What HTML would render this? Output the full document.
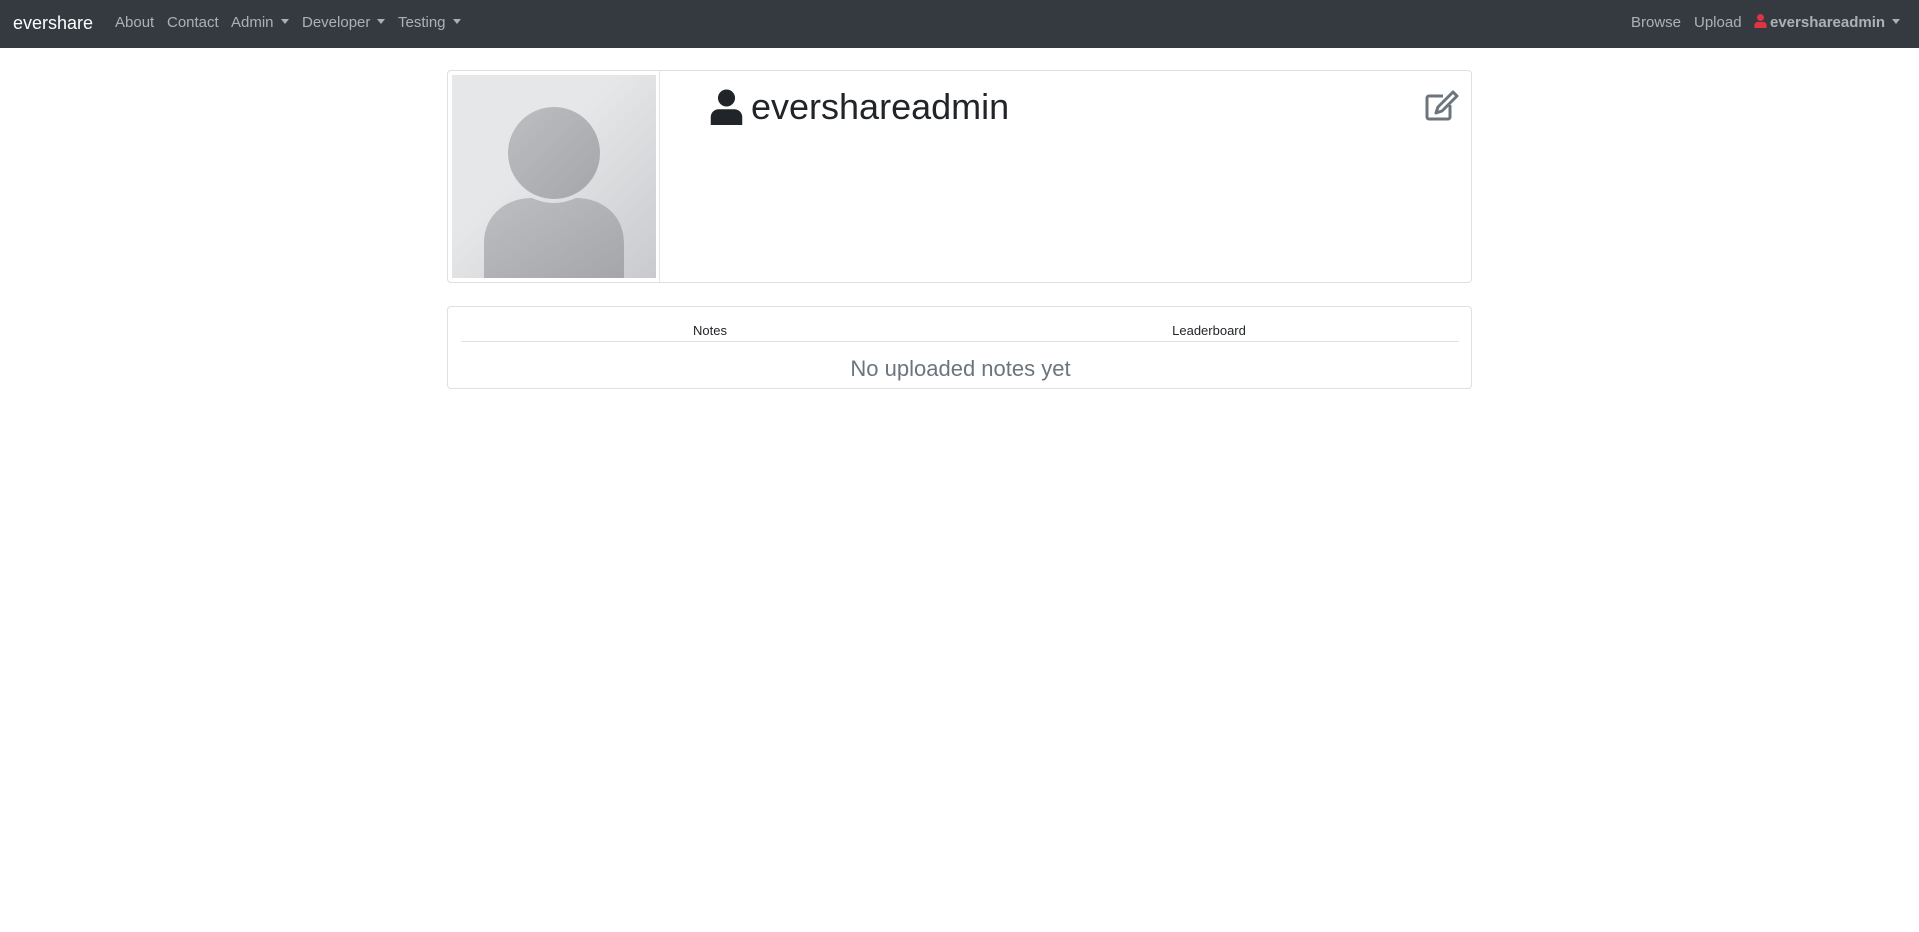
<!DOCTYPE html>
<html><head><style>
*{box-sizing:border-box;margin:0;padding:0}
body{width:1919px;height:932px;background:#fff;font-family:"Liberation Sans",sans-serif;position:relative;overflow:hidden}
.nav{position:absolute;left:0;top:0;width:1919px;height:48px;background:#343a40}
.nav span{position:absolute;top:14px;font-size:15px;color:rgba(255,255,255,.6);white-space:nowrap}
.brand{color:#fff!important;font-size:18px!important;top:13px!important}
.car:after{content:"";display:inline-block;margin-left:7px;vertical-align:3px;border-top:5px solid;border-left:4px solid transparent;border-right:4px solid transparent}
.card{position:absolute;border:1px solid #dfdfdf;border-radius:4px;background:#fff}
</style></head><body>
<div class="nav">
<span class="brand" style="left:13px">evershare</span>
<span style="left:115px">About</span>
<span style="left:167px">Contact</span>
<span class="car" style="left:231px">Admin</span>
<span class="car" style="left:302px">Developer</span>
<span class="car" style="left:398px">Testing</span>
<span style="left:1631px">Browse</span>
<span style="left:1694px">Upload</span>
<span class="car" style="left:1754px;font-weight:bold"><svg width="13" height="14" viewBox="0 0 14 16" style="vertical-align:-1px;margin-right:3px"><circle cx="7" cy="4" r="4" fill="#dc3545"/><path d="M0 16v-3a4 4 0 0 1 4-4h6a4 4 0 0 1 4 4v3z" fill="#dc3545"/></svg>evershareadmin</span>
</div>
<div class="card" style="left:447px;top:70px;width:1025px;height:213px">
<div style="position:absolute;left:0;top:0;width:212px;height:211px;border-right:1px solid #e4e4e4;padding:4px">
<svg width="204" height="203" viewBox="0 0 204 203"><defs><linearGradient id="g" x1="0" y1="0" x2="1" y2="1"><stop offset="0.4" stop-color="#e6e7e9"/><stop offset="1" stop-color="#c9cacd"/></linearGradient><linearGradient id="h" x1="0" y1="0" x2="1" y2="1"><stop offset="0" stop-color="#bdbec1"/><stop offset="1" stop-color="#a5a6a9"/></linearGradient></defs><rect width="204" height="203" fill="url(#g)"/><ellipse cx="102" cy="78" rx="46" ry="46" fill="url(#h)"/><path d="M32 203V168c0-28 22-45 48-45 7 3 14 5 22 5s15-2 22-5c26 0 48 17 48 45v35z" fill="url(#h)"/></svg>
</div>
<svg style="position:absolute;left:262px;top:18px" width="33" height="36" viewBox="0 0 14 16"><circle cx="7" cy="4" r="3.8" fill="#212529"/><path d="M0 16v-3.5a3.5 3.5 0 0 1 3.5-3.5h7a3.5 3.5 0 0 1 3.5 3.5v3.5z" fill="#212529"/></svg>
<div style="position:absolute;left:303px;top:15px;font-size:36px;color:#212529">evershareadmin</div>
<svg style="position:absolute;left:977px;top:19px" width="34" height="31" viewBox="0 0 34 31" fill="none" stroke="#6c757d" stroke-width="3"><path d="M18 6H4a2 2 0 0 0-2 2v19a2 2 0 0 0 2 2h19a2 2 0 0 0 2-2V15"/><path d="M28 2l4 4-15 15-6 2 2-6z" stroke-linejoin="round"/></svg>
</div>
<div class="card" style="left:447px;top:306px;width:1025px;height:83px">
<div style="position:absolute;left:13px;top:34px;width:998px;border-top:1px solid #dee2e6"></div>
<div style="position:absolute;left:0;top:16px;width:524px;text-align:center;font-size:13px;color:#212529">Notes</div>
<div style="position:absolute;left:512px;top:16px;width:498px;text-align:center;font-size:13px;color:#212529">Leaderboard</div>
<div style="position:absolute;left:0;top:49px;width:1025px;text-align:center;font-size:22px;color:#6c757d">No uploaded notes yet</div>
</div>
</body></html>
